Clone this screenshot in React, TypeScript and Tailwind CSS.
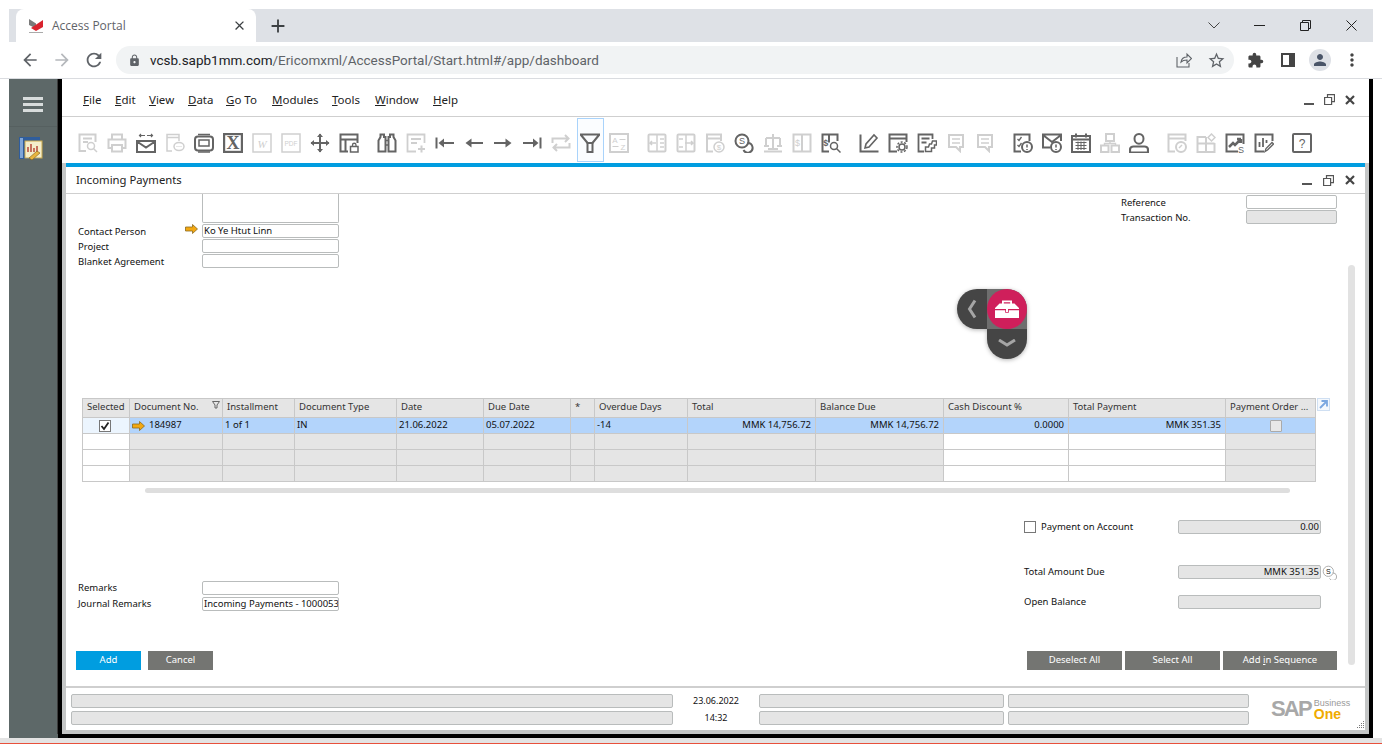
import type { ReactNode } from "react";
import {
  MdAdd,
  MdArrowBack,
  MdArrowForward,
  MdClose,
  MdExtension,
  MdLock,
  MdMoreVert,
  MdPerson,
  MdRefresh,
  MdStarBorder,
} from "react-icons/md";

const sapFont = { fontFamily: '"Noto Sans", Tahoma, sans-serif' };

type ToolIcon = { on?: boolean; gapAfter?: boolean; active?: boolean; art: ReactNode };

const coin = (
  <>
    <circle cx="8" cy="8" r="6.5" />
    <path d="M13.5 10a4.8 4.8 0 1 1-4 7" />
    <text x="8" y="11" fontSize="9" textAnchor="middle" fill="currentColor" stroke="none" fontFamily="Liberation Sans">S</text>
  </>
);

const bubble = (
  <>
    <path d="M3 2h14v12h-3v4l-4-4H3z" />
    <path d="M6 6h8M6 10h8" strokeWidth="1.5" />
  </>
);

const tools: ToolIcon[] = [
  { art: <><path d="M8 18H1.5V1.5h16V9M5 5.5h9M5 9h5" /><circle cx="13" cy="13" r="3.5" strokeWidth="1.5" /><path d="M15.5 15.5l3.5 3.5" strokeWidth="1.5" /></> },
  { art: <><path d="M5 6V1.5h10V6M5 15H1.5V6.5h17V15H15" /><path d="M5 12h10v6.5H5z" /></> },
  { on: true, art: <><path d="M1 8h18v11H1zM1 8.5l9 6 9-6" /><path d="M9 2.5H3.500m1.500-1.500l-1.500 1.500 1.500 1.500M11 2.500h5.500m-1.500-1.500l1.500 1.500-1.500 1.500" strokeWidth="1.2" /></> },
  { art: <><path d="M7 18H2V1.5h12V8M2 4.5h12" strokeWidth="1.5" /><ellipse cx="14" cy="13.5" rx="5" ry="4" strokeWidth="1.5" /><path d="M11.5 13.5h1M13.5 13.5h1M15.5 13.5h1" strokeWidth="1.2" /></> },
  { on: true, art: <><rect x="1" y="3.5" width="18" height="14" rx="3" /><rect x="5" y="7" width="10" height="6" strokeWidth="1.5" /><path d="M4 1.5h12M4 19h12" strokeWidth="1.5" /></> },
  { on: true, art: <><rect x="1" y="1" width="18" height="18" strokeWidth="2.4" /><text x="10" y="16" fontSize="18" fontWeight="700" textAnchor="middle" fill="currentColor" stroke="none" fontFamily="Liberation Serif">X</text></> },
  { art: <><rect x="1" y="1" width="18" height="18" strokeWidth="1.5" /><text x="10" y="14.5" fontSize="11" fontStyle="italic" textAnchor="middle" fill="currentColor" stroke="none" fontFamily="Liberation Serif">W</text></> },
  { art: <><rect x="1" y="1" width="18" height="18" strokeWidth="1.5" /><text x="10" y="13" fontSize="6.5" textAnchor="middle" fill="currentColor" stroke="none" fontFamily="Liberation Sans">PDF</text></> },
  { on: true, art: <><path d="M10 1v18M1 10h18" /><path d="M7 4l3-3.5L13 4zM7 16l3 3.5 3-3.5zM4 7L.5 10 4 13zM16 7l3.5 3-3.5 3z" fill="currentColor" stroke="none" /></> },
  { on: true, gapAfter: true, art: <><path d="M9 18.5H1.5v-17h17V10M1.5 6.5h17M6.5 6.5v12" /><rect x="11.5" y="13.5" width="7.5" height="5.5" strokeWidth="1.5" /><path d="M13.5 13.5V12a1.7 1.7 0 0 1 3.5 0v1.5" strokeWidth="1.3" /></> },
  { on: true, art: <><path d="M1.500 18.500h7V4H7V1.500H3.500V4L1.500 7.500zM18.500 18.500h-7V4H13V1.500h3.500V4l2 3.500z" /><path d="M8.500 7.500h3M8.500 12h3" strokeWidth="1.500" /></> },
  { art: <><path d="M10 18.5H1.5v-17h17V10M5 6h10M5 10h6" strokeWidth="1.8" /><path d="M12 16h7M15.5 12.5v7" /></> },
  { on: true, art: <><path d="M1.5 4.5v11" /><path d="M19 10H8" /><path d="M9 5.5L3.5 10 9 14.5z" fill="currentColor" stroke="none" /></> },
  { on: true, art: <><path d="M19 10H6" /><path d="M7.5 5.5L1.5 10l6 4.5z" fill="currentColor" stroke="none" /></> },
  { on: true, art: <><path d="M1 10h13" /><path d="M12.5 5.5l6 4.5-6 4.5z" fill="currentColor" stroke="none" /></> },
  { on: true, art: <><path d="M18.5 4.5v11" /><path d="M1 10h11" /><path d="M11 5.5l5.5 4.5-5.5 4.5z" fill="currentColor" stroke="none" /></> },
  { art: <><path d="M1.5 10V5.5h16M14 2l3.5 3.5L14 9M18.5 10v4.5h-16M6 11l-3.5 3.5L6 18" /></> },
  { on: true, active: true, art: <><path d="M.5 1.500h19L12.500 10h-5z" strokeWidth="2.200" /><path d="M7.500 10h5v9h-5z" /></> },
  { gapAfter: true, art: <><rect x="1" y="1" width="18" height="18" strokeWidth="2" /><text x="6" y="9.500" fontSize="8" textAnchor="middle" fill="currentColor" stroke="none" fontFamily="Liberation Sans">A</text><text x="14" y="16.500" fontSize="8" textAnchor="middle" fill="currentColor" stroke="none" fontFamily="Liberation Sans">Z</text><path d="M10.500 6.500h6M9.500 13.500h-6" strokeWidth="1.200" /></> },
  { art: <><rect x="1.5" y="1.5" width="17" height="17" rx="1" /><path d="M10 1v18M13 6h4M13 10h4M13 14h4" strokeWidth="1.5" /><path d="M9 10H3l2-2m-2 2l2 2" strokeWidth="1.5" /></> },
  { art: <><rect x="1.5" y="1.5" width="17" height="17" rx="1" /><path d="M10 1v18M3 6h4M3 14h4" strokeWidth="1.5" /><path d="M9 10h8l-2-2m2 2l-2 2" strokeWidth="1.5" /></> },
  { art: <><path d="M8 18.5H2v-17h14V8M2 5.5h14" /><circle cx="14" cy="14" r="5" strokeWidth="1.5" /><text x="14" y="17" fontSize="8" textAnchor="middle" fill="currentColor" stroke="none" fontFamily="Liberation Sans">$</text></> },
  { on: true, art: coin },
  { art: <><path d="M10 1v16M3 5h14M3 5v8M17 5v8M1 13h5M14 13h5M1 18.5h18M5 16h10" /></> },
  { art: <><rect x="1.5" y="1.5" width="17" height="17" /><path d="M10 1v18" /><text x="5.5" y="13" fontSize="9" textAnchor="middle" fill="currentColor" stroke="none" fontFamily="Liberation Sans">$</text></> },
  { on: true, gapAfter: true, art: <><path d="M8 18.5H1.5v-17h15V8M8 1.5v8" /><text x="4.8" y="13" fontSize="9" fontWeight="700" textAnchor="middle" fill="currentColor" stroke="none" fontFamily="Liberation Sans">$</text><circle cx="13" cy="13" r="3.5" strokeWidth="1.5" /><path d="M15.5 15.5L19.5 19.5" strokeWidth="1.5" /></> },
  { on: true, art: <><path d="M1.5 1.5v17h18" /><path d="M6 15l1-4 8-9 3 3-8 9z" strokeWidth="1.6" /></> },
  { on: true, art: <><path d="M9 18.5H1.5v-17h17V9M1.5 5.5h17" /><circle cx="14" cy="14" r="3" strokeWidth="1.5" /><circle cx="14" cy="14" r="5" strokeWidth="1.5" strokeDasharray="2 1.6" /></> },
  { on: true, art: <><path d="M7 18.5H1.5v-17h14V6M4.5 5.5h8M4.5 9.5h5" strokeWidth="1.8" /><path d="M8.5 18.5V14h3l1-3h2l1-3h4v4h-2v3h-3v3.5z" strokeWidth="1.5" /></> },
  { art: bubble },
  { gapAfter: true, art: bubble },
  { on: true, art: <><path d="M8 18.5H1.5v-17h15V8" /><path d="M4.5 6l1.5 1.5L8.5 4M4.5 12l1.5 1.5L8.5 10" strokeWidth="1.3" /><circle cx="14" cy="14" r="5" /><path d="M14 11.5v3M14 16v1" strokeWidth="1.5" /></> },
  { on: true, art: <><path d="M8 14.5H1V1.5h18V8M1 2l9 7 9-7" /><circle cx="14" cy="14" r="5" /><path d="M14 11.5v3M14 16v1" strokeWidth="1.5" /></> },
  { on: true, art: <><rect x="1" y="3" width="18" height="16" /><path d="M5 .5v4M15 .5v4M1 6.5h18" /><path d="M4.5 9.5h11M4.5 12.5h11M4.5 15.5h11M7 8.5v8.5M10 8.5v8.5M13 8.5v8.5" strokeWidth="1" /></> },
  { art: <><rect x="6" y="1" width="8" height="7" /><rect x="1" y="12.5" width="7.5" height="6.5" /><rect x="11.5" y="12.5" width="7.5" height="6.5" /><path d="M10 8v2.5M4.5 12v-1.5h11V12" strokeWidth="1.4" /></> },
  { on: true, gapAfter: true, art: <><path d="M10 1c3 0 4.500 2.300 4.500 4.700 0 2.600-1.800 5-4.500 5s-4.500-2.400-4.500-5C5.500 3.300 7 1 10 1z" /><path d="M1 19.500v-3c0-1.500 1.500-3 3.500-3h11c2 0 3.500 1.500 3.500 3v3z" strokeWidth="2.200" /></> },
  { art: <><path d="M8 18.5H1.500v-17h17V8M1.500 5.500h17" /><circle cx="14" cy="14" r="5" /><path d="M12 15l3-3" strokeWidth="1.500" /></> },
  { art: <><path d="M10 4H1.500v15h17v-9M1.500 10.500h17M10 4v15" /><path d="M15.500 1l3.500 3.500-3.500 3.500L12 4.500z" strokeWidth="1.500" /></> },
  { on: true, art: <><path d="M13 18.500H1.500v-17h17V11" /><path d="M4 14l4-4 2 2 6-6m0 0h-4m4 0v4" strokeWidth="2.500" /><text x="16" y="19.500" fontSize="9" textAnchor="middle" fill="currentColor" stroke="none" fontFamily="Liberation Sans">S</text></> },
  { on: true, gapAfter: true, art: <><path d="M10 18.500H1.500v-17h17V8" /><path d="M5.500 14V9M9 14V5M12.500 10V7" strokeWidth="1.800" /><path d="M11 18.500l1-3 6-6 1.500 1.500-6 6z" strokeWidth="1.300" /></> },
  { on: true, art: <><rect x="1" y="1" width="18" height="18" rx="1" /><text x="10" y="14.500" fontSize="12" textAnchor="middle" fill="currentColor" stroke="none" fontFamily="Liberation Sans">?</text></> },
];

function ToolbarIcon({ icon }: { icon: ToolIcon }) {
  return (
    <div className={`relative flex h-[20px] w-[20px] shrink-0 items-center justify-center ${icon.gapAfter ? "mr-[18px]" : "mr-[9px]"}`}>
      {icon.active && (
        <div className="absolute top-[-15px] left-[-3px] h-[44px] w-[27px] border border-[#a9d3fb] bg-[#fbfdff]" />
      )}
      <svg
        width="20"
        height="20"
        viewBox="0 0 20 20"
        fill="none"
        stroke="currentColor"
        strokeWidth="2"
        className={`relative ${icon.on ? "text-[#646464]" : "text-[#cfcfcf]"}`}
      >
        {icon.art}
      </svg>
    </div>
  );
}

function WinButtons({ gap }: { gap: string }) {
  return (
    <div className={`flex items-center ${gap}`}>
      <div className="mt-[8px] h-[2px] w-[10px] bg-[#555]" />
      <svg width="11" height="11" viewBox="0 0 11 11" fill="none" stroke="#555" strokeWidth="1.2">
        <path d="M.6 3.500h7v7h-7zM3.500 3.500V.6h7v7H7.600" />
      </svg>
      <svg width="10" height="10" viewBox="0 0 10 10" fill="none" stroke="#444" strokeWidth="2.200">
        <path d="M1 1l8 8M9 1l-8 8" />
      </svg>
    </div>
  );
}

function Field({ w, gray, text, right }: { w: string; gray?: boolean; text?: string; right?: boolean }) {
  return (
    <div
      className={`flex h-[14px] shrink-0 items-center overflow-hidden whitespace-nowrap rounded-[2px] border border-[#b9bcbc] px-[1px] text-[9.5px] text-[#111] ${w} ${gray ? "bg-[#e5e5e5]" : "bg-white"} ${right ? "justify-end" : ""}`}
    >
      {text}
    </div>
  );
}

function YellowArrow() {
  return (
    <svg width="13" height="10" viewBox="0 0 13 10" className="shrink-0">
      <path d="M.5 3h7V.5L12.500 5l-5 4.500V7h-7z" fill="#f3a812" stroke="#8a6a20" strokeWidth=".8" />
    </svg>
  );
}

const columns = [
  { label: "Selected", w: "w-[47px]" },
  { label: "Document No.", w: "w-[93px]" },
  { label: "Installment", w: "w-[72px]" },
  { label: "Document Type", w: "w-[102px]" },
  { label: "Date", w: "w-[87px]" },
  { label: "Due Date", w: "w-[87px]" },
  { label: "*", w: "w-[24px]" },
  { label: "Overdue Days", w: "w-[93px]" },
  { label: "Total", w: "w-[128px]" },
  { label: "Balance Due", w: "w-[128px]" },
  { label: "Cash Discount %", w: "w-[125px]" },
  { label: "Total Payment", w: "w-[157px]" },
  { label: "Payment Order ...", w: "w-[90px]" },
];

const rowOne: ReactNode[] = [
  <div key="c" className="mr-[5px] flex h-[12px] w-[12px] items-center justify-center border border-[#777] bg-white">
    <svg width="10" height="10" viewBox="0 0 10 10" fill="none" stroke="#222" strokeWidth="1.800"><path d="M1.500 5l2.500 3 4.500-6.500" /></svg>
  </div>,
  <div key="d" className="flex items-center gap-[4px]"><YellowArrow /><span>184987</span></div>,
  "1 of 1",
  "IN",
  "21.06.2022",
  "05.07.2022",
  "",
  "-14",
  "MMK 14,756.72",
  "MMK 14,756.72",
  "0.0000",
  "MMK 351.35",
  <div key="p" className="ml-[8px] h-[12px] w-[12px] rounded-[1px] border border-[#aaa] bg-[#e8e8e8]" />,
];

// white cells in the empty rows: the checkbox column and the two editable ones
const editable = [0, 10, 11];
const centred = [0, 12];
const rightAligned = [8, 9, 10, 11];

function GridTable() {
  return (
    <div className="relative ml-[16px] w-[1234px] border-t border-l border-[#c8c8c8] text-[9.5px] text-[#111]">
      <div className="flex h-[19px] bg-[#e5e5e5]">
        {columns.map((col, i) => (
          <div key={col.label} className={`relative flex items-center border-r border-b border-[#c8c8c8] pb-[2px] pl-[4px] whitespace-nowrap text-[#333] ${col.w}`}>
            {col.label}
            {i === 1 && (
              <svg width="8" height="8" viewBox="0 0 8 8" fill="none" stroke="#666" className="absolute top-[2px] right-[2px]"><path d="M.5 .5h7L5 4v3H3V4z" /></svg>
            )}
          </div>
        ))}
      </div>
      <div className="flex h-[16px] bg-[#b3d4fb]">
        {columns.map((col, i) => (
          <div
            key={col.label}
            className={`flex items-center border-r border-b border-[#c8c8c8] whitespace-nowrap ${col.w} ${i === 0 ? "bg-[#ecf5fe]" : ""} ${centred.includes(i) ? "justify-center" : ""} ${rightAligned.includes(i) ? "justify-end pr-[4px]" : "pl-[2px]"}`}
          >
            {rowOne[i]}
          </div>
        ))}
      </div>
      {[0, 1, 2].map((row) => (
        <div key={row} className="flex h-[16px]">
          {columns.map((col, i) => (
            <div key={col.label} className={`border-r border-b border-[#c8c8c8] ${col.w} ${editable.includes(i) ? "bg-white" : "bg-[#e5e5e5]"}`} />
          ))}
        </div>
      ))}
      <svg width="13" height="13" viewBox="0 0 13 13" fill="none" className="absolute top-[-1px] left-[1234px]">
        <rect x=".5" y=".5" width="12" height="12" fill="#f4f8fd" stroke="#cfdff2" />
        <path d="M3 10l6.500-6.500M4.500 3h5.500v5.500" stroke="#7ba7e0" strokeWidth="1.800" />
      </svg>
    </div>
  );
}

function FloatingTools() {
  return (
    <div className="absolute top-[289px] left-[957px] h-[70px] w-[70px] drop-shadow-[0_1px_2px_rgba(0,0,0,0.3)]">
      <div className="absolute top-0 left-0 flex h-[40px] w-[45px] items-center rounded-l-[20px] bg-[#454545] pl-[10px]">
        <svg width="10" height="20" viewBox="0 0 10 20" fill="none" stroke="#a5a5a5" strokeWidth="3"><path d="M8 1.500L2.500 10 8 18.500" /></svg>
      </div>
      <div className="absolute top-[20px] left-[30px] flex h-[50px] w-[40px] items-end justify-center rounded-b-[20px] bg-[#454545] pb-[12px]">
        <svg width="18" height="8" viewBox="0 0 18 8" fill="none" stroke="#a5a5a5" strokeWidth="3"><path d="M1 1l8 5 8-5" /></svg>
      </div>
      <div className="absolute top-0 left-[30px] h-[40px] w-[40px] rounded-tr-[20px] bg-[#6e6e6e]" />
      <div className="absolute top-0 left-[30px] flex h-[40px] w-[40px] items-center justify-center rounded-full bg-[#cf1f5b]">
        <svg width="26" height="22" viewBox="0 0 26 22" fill="white">
          <path d="M8 6V2.500h10V6h-1.800V4.200H9.800V6z" />
          <path d="M5.500 5.500h15L25 10v1H1v-1zM1 12.200h10.200v2.600h3.600v-2.600H25V20H1z" />
          <rect x="12" y="10" width="2" height="4" />
        </svg>
      </div>
    </div>
  );
}

function SapLogo() {
  return (
    <div className="flex items-start" style={{ fontFamily: '"Liberation Sans", sans-serif' }}>
      <span className="text-[22px] leading-[22px] font-bold tracking-[-1.800px] text-[#a8a8a8]">SAP</span>
      <div className="ml-[3px] flex flex-col">
        <span className="text-[9px] leading-[10px] text-[#9a9a9a]">Business</span>
        <span className="text-[14px] leading-[12px] font-bold text-[#f0ab00]">One</span>
      </div>
    </div>
  );
}

function BrowserChrome() {
  return (
    <>
      <div className="ml-[9px] flex h-[33px] w-[1364px] items-end bg-[#dee1e6]">
        <div className="ml-[7px] flex h-[33px] w-[240px] items-center rounded-t-[8px] bg-white pr-[9px] pl-[12px]">
          <svg width="16" height="16" viewBox="0 0 16 16">
            <path d="M1 1l7 4.500v5L1 7z" fill="#7a7a7a" />
            <path d="M15 2v7l-7 4-5-3z" fill="#d9232e" />
            <path d="M1 14h14v1H1z" fill="#aaa" />
          </svg>
          <span className="ml-[8px] flex-1 text-[12px] text-[#5f6368]" style={{ fontFamily: '"Open Sans", sans-serif' }}>Access Portal</span>
          <MdClose size={15} className="text-[#3c4043]" />
        </div>
        <MdAdd size={22} className="mb-[5px] ml-[11px] text-[#3c4043]" />
        <div className="mb-[11px] ml-auto flex items-center text-[#333]">
          <svg width="12" height="7" viewBox="0 0 12 7" fill="none" stroke="#444"><path d="M.5 .5L6 6l5.500-5.500" /></svg>
          <div className="ml-[34px] h-[1px] w-[11px] bg-[#222]" />
          <svg width="11" height="11" viewBox="0 0 11 11" fill="none" stroke="#222" className="ml-[35px]"><path d="M.5 2.500h8v8h-8zM2.500 2.500v-2h8v8h-2" /></svg>
          <svg width="11" height="11" viewBox="0 0 11 11" fill="none" stroke="#222" className="mr-[16px] ml-[35px]"><path d="M.5 .5l10 10M10.500 .5l-10 10" /></svg>
        </div>
      </div>
      <div className="flex h-[36px] items-center pl-[20px] text-[#5f6368]">
        <MdArrowBack size={20} />
        <MdArrowForward size={20} className="ml-[12px] text-[#b5b8bc]" />
        <MdRefresh size={22} className="ml-[11px]" />
        <div className="ml-[11px] flex h-[28px] w-[1118px] items-center rounded-full bg-[#f1f3f4] pl-[12px]">
          <MdLock size={13} />
          <span className="ml-[9px] text-[13.500px] text-[#5f6368]" style={{ fontFamily: 'Roboto, sans-serif' }}>
            <span className="text-[#202124]">vcsb.sapb1mm.com</span>/Ericomxml/AccessPortal/Start.html#/app/dashboard
          </span>
          <svg width="16" height="16" viewBox="0 0 16 16" fill="none" stroke="#5f6368" strokeWidth="1.100" className="mr-[15px] ml-auto">
            <path d="M1 5v10h12v-4M5 10c.5-3 3-5 6-5V2l4.500 4.500L11 11V8c-2.500 0-4.500 .5-6 2z" />
          </svg>
          <MdStarBorder size={19} className="mr-[8px]" />
        </div>
        <MdExtension size={17} className="ml-[13px] text-[#444]" />
        <div className="ml-[17px] flex h-[14px] w-[14px] border-2 border-[#444]"><div className="ml-auto h-full w-[4px] bg-[#444]" /></div>
        <div className="ml-[14px] flex h-[22px] w-[22px] items-center justify-center rounded-full bg-[#dee1e6]"><MdPerson size={18} className="text-[#4a5568]" /></div>
        <MdMoreVert size={20} className="ml-[11px] text-[#444]" />
      </div>
    </>
  );
}

export default function App() {
  return (
    <div className="relative h-[744px] w-[1382px] overflow-hidden bg-white pt-[9px]">
      <BrowserChrome />
      <div className="h-[1px] bg-[#dadce0]" />

      <div className="ml-[9px] flex h-[655px] w-[1364px]" style={sapFont}>
        {/* portal side rail */}
        <div className="flex w-[49px] shrink-0 flex-col items-center border-r border-[#3c3c3c] bg-[#5d6868] pt-[18px]">
          <div className="flex w-[20px] flex-col gap-[3px]">
            <div className="h-[3px] bg-[#d8dcdc]" />
            <div className="h-[3px] bg-[#d8dcdc]" />
            <div className="h-[3px] bg-[#d8dcdc]" />
          </div>
          <div className="mt-[14px] h-[1px] w-full bg-[#566060]" />
          <svg width="24" height="24" viewBox="0 0 24 24" className="mt-[10px] mr-[5px]">
            <rect x="0" y="0" width="21" height="22" fill="#2f5d9c" />
            <rect x="1" y="1" width="3" height="20" fill="#7fa6d8" />
            <rect x="6" y="4" width="17" height="17" fill="#f4eecb" stroke="#caa74b" />
            <path d="M9 15v-5M12 15V7M15 15v-4M18 15V9" stroke="#b84a3a" strokeWidth="1.500" />
            <path d="M10 21l8-7 3 2-8 7z" fill="#e8b53e" stroke="#7d5b16" strokeWidth=".6" />
          </svg>
        </div>

        <div className="w-[4px] shrink-0 bg-black" />

        {/* SAP client */}
        <div className="flex w-[1307px] flex-col bg-white text-[#111]">
          <div className="flex h-[37px] shrink-0 items-center justify-between pt-[4px] pr-[14px] pl-[21px]">
            <div className="flex text-[11.500px] text-[#222]">
              <span className="w-[32px]"><u>F</u>ile</span>
              <span className="w-[34px]"><u>E</u>dit</span>
              <span className="w-[39px]"><u>V</u>iew</span>
              <span className="w-[38px]"><u>D</u>ata</span>
              <span className="w-[46px]"><u>G</u>o To</span>
              <span className="w-[60px]"><u>M</u>odules</span>
              <span className="w-[43px]"><u>T</u>ools</span>
              <span className="w-[58px]"><u>W</u>indow</span>
              <span><u>H</u>elp</span>
            </div>
            <WinButtons gap="gap-[10px]" />
          </div>
          <div className="h-[1px] shrink-0 bg-[#cfcfcf]" />
          <div className="flex h-[46px] shrink-0 items-center pt-[5px] pl-[16px]">
            {tools.map((icon, i) => (
              <ToolbarIcon key={i} icon={icon} />
            ))}
          </div>

          <div className="flex min-h-0 flex-1 flex-col border-x-[4px] border-b-[4px] border-[#c4c6c6]">
            <div className="h-[4px] shrink-0 bg-[#009de0]" />
            <div className="flex h-[26px] shrink-0 items-center justify-between pr-[10px] pl-[10px]">
              <span className="text-[11.300px] text-[#222]">Incoming Payments</span>
              <WinButtons gap="gap-[11px]" />
            </div>
            <div className="h-[1px] shrink-0 bg-[#cfcfcf]" />

            <div className="flex h-[492px] shrink-0">
              <div className="flex w-[1274px] flex-col">
                <div className="flex h-[74px] shrink-0 justify-between pr-[3px]">
                  <div className="pl-[12px]">
                    <div className="ml-[124px] h-[29px] w-[137px] rounded-b-[2px] border-x border-b border-[#b9bcbc]" />
                    <div className="mt-[1px] flex h-[15px] items-start text-[9.500px]">
                      <span className="mt-[1px] w-[107px]">Contact Person</span>
                      <div className="mr-[4px]"><YellowArrow /></div>
                      <Field w="w-[137px]" text="Ko Ye Htut Linn" />
                    </div>
                    <div className="flex h-[15px] items-start text-[9.500px]">
                      <span className="mt-[1px] w-[124px]">Project</span>
                      <Field w="w-[137px]" />
                    </div>
                    <div className="flex h-[15px] items-start text-[9.500px]">
                      <span className="mt-[1px] w-[124px]">Blanket Agreement</span>
                      <Field w="w-[137px]" />
                    </div>
                  </div>
                  <div className="pt-[1px] text-[9.500px]">
                    <div className="flex h-[15px] items-start">
                      <span className="mt-[1px] w-[125px]">Reference</span>
                      <Field w="w-[91px]" />
                    </div>
                    <div className="flex h-[15px] items-start">
                      <span className="mt-[1px] w-[125px]">Transaction No.</span>
                      <Field w="w-[91px]" gray />
                    </div>
                  </div>
                </div>

                <div className="mt-[130px]">
                  <GridTable />
                </div>
                <div className="mt-[6px] ml-[79px] h-[5px] w-[1145px] rounded-full bg-[#dedede]" />

                <div className="mt-[27px] flex h-[95px] justify-between pr-[3px] pl-[12px] text-[9.500px]">
                  <div className="pt-[61px]">
                    <div className="flex h-[16px] items-start">
                      <span className="w-[124px]">Remarks</span>
                      <Field w="w-[137px]" />
                    </div>
                    <div className="flex h-[16px] items-start">
                      <span className="w-[124px]">Journal Remarks</span>
                      <Field w="w-[137px]" text="Incoming Payments - 1000053" />
                    </div>
                  </div>
                  <div className="w-[313px]">
                    <div className="flex h-[14px] items-center">
                      <div className="h-[12px] w-[12px] border border-[#777] bg-white" />
                      <span className="ml-[5px] w-[137px]">Payment on Account</span>
                      <Field w="w-[143px]" gray right text="0.00" />
                    </div>
                    <div className="mt-[31px] flex h-[14px] items-center">
                      <span className="w-[154px]">Total Amount Due</span>
                      <Field w="w-[143px]" gray right text="MMK 351.35" />
                      <svg width="15" height="15" viewBox="0 0 19 19" fill="none" stroke="#9a9a9a" className="ml-[1px]">{coin}</svg>
                    </div>
                    <div className="mt-[16px] flex h-[14px] items-center">
                      <span className="w-[154px]">Open Balance</span>
                      <Field w="w-[143px]" gray />
                    </div>
                  </div>
                </div>

                <div className="mt-[36px] flex justify-between pr-[3px] pl-[10px] text-[9.500px] text-white">
                  <div className="flex gap-[7px]">
                    <div className="flex h-[19px] w-[65px] items-center justify-center bg-[#009de0]">Add</div>
                    <div className="flex h-[19px] w-[65px] items-center justify-center bg-[#747572]">Cancel</div>
                  </div>
                  <div className="flex gap-[3px]">
                    <div className="flex h-[19px] w-[95px] items-center justify-center bg-[#747572]">Deselect All</div>
                    <div className="flex h-[19px] w-[95px] items-center justify-center bg-[#747572]">Select All</div>
                    <div className="flex h-[19px] w-[114px] items-center justify-center bg-[#747572]"><span>Add <u>i</u>n Sequence</span></div>
                  </div>
                </div>
              </div>
              <div className="ml-[8px] mt-[71px] h-[400px] w-[7px] rounded-full bg-[#e2e2e2]" />
            </div>

            <div className="h-[2px] shrink-0 bg-[#cfcfcf]" />
            <div className="relative flex flex-1 items-center pl-[5px] text-[9px] text-[#111]">
              <div className="flex flex-col gap-[3px]">
                <Field w="w-[602px]" gray />
                <Field w="w-[602px]" gray />
              </div>
              <div className="flex w-[86px] flex-col items-center gap-[3px]">
                <span className="flex h-[14px] items-center">23.06.2022</span>
                <span className="flex h-[14px] items-center">14:32</span>
              </div>
              <div className="flex flex-col gap-[3px]">
                <Field w="w-[245px]" gray />
                <Field w="w-[245px]" gray />
              </div>
              <div className="ml-[4px] flex flex-col gap-[3px]">
                <Field w="w-[241px]" gray />
                <Field w="w-[241px]" gray />
              </div>
              <div className="ml-[22px]">
                <SapLogo />
              </div>
              <svg width="10" height="10" viewBox="0 0 10 10" fill="#777" className="absolute right-0 bottom-0">
                <path d="M8 1h1v1H8zM6 3h1v1H6zM8 3h1v1H8zM4 5h1v1H4zM6 5h1v1H6zM8 5h1v1H8zM2 7h1v1H2zM4 7h1v1H4zM6 7h1v1H6zM8 7h1v1H8z" />
              </svg>
            </div>
          </div>
        </div>

        <div className="w-[4px] shrink-0 bg-black" />
      </div>

      <div className="flex h-[4px]">
        <div className="ml-[9px] w-[49px] bg-[#5d6868]" />
        <div className="w-[1315px] bg-black" />
      </div>
      <div className="h-[5px] bg-[#e3e3e3]" />
      <div className="h-[1px] bg-[#e8503c]" />

      <FloatingTools />
    </div>
  );
}
